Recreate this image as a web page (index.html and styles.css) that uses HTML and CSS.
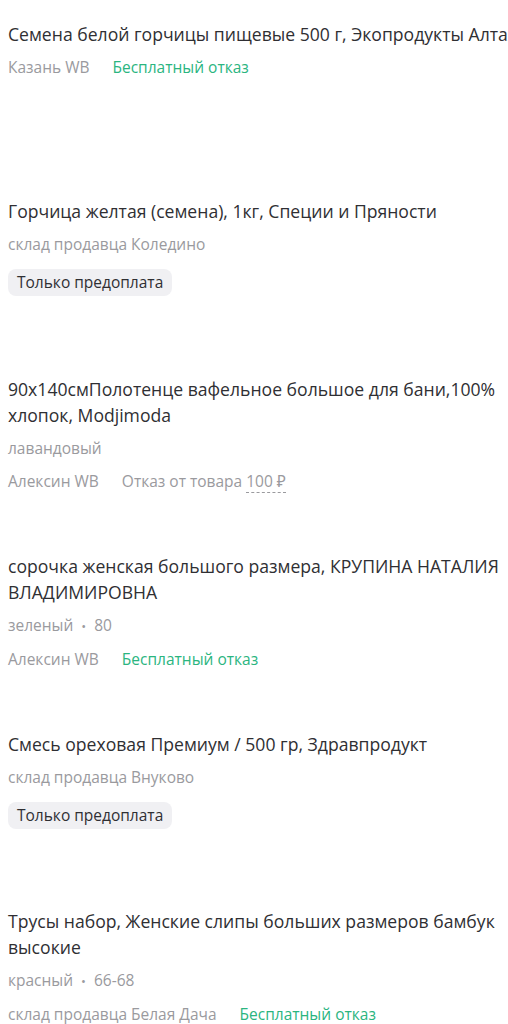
FILE: index.html
```html
<!DOCTYPE html>
<html lang="ru">
<head>
<meta charset="utf-8">
<link rel="stylesheet" href="styles.css">
</head>
<body>
<div class="list">
  <div class="item">
    <div class="title nowrap">Семена белой горчицы пищевые 500 г, Экопродукты Алтая</div>
    <div class="meta"><span class="store">Казань WB</span><span class="green">Бесплатный отказ</span></div>
  </div>
  <div class="item">
    <div class="title">Горчица желтая (семена), 1кг, Специи и Пряности</div>
    <div class="meta"><span class="store">склад продавца Коледино</span></div>
    <div class="badge">Только предоплата</div>
  </div>
  <div class="item">
    <div class="title">90x140смПолотенце вафельное большое для бани,100% хлопок, Modjimoda</div>
    <div class="meta">лавандовый</div>
    <div class="meta"><span class="store">Алексин WB</span><span class="refuse">Отказ от товара <span class="price">100 ₽</span></span></div>
  </div>
  <div class="item">
    <div class="title">сорочка женская большого размера, КРУПИНА НАТАЛИЯ ВЛАДИМИРОВНА</div>
    <div class="meta">зеленый<span class="dot">•</span>80</div>
    <div class="meta"><span class="store">Алексин WB</span><span class="green">Бесплатный отказ</span></div>
  </div>
  <div class="item">
    <div class="title">Смесь ореховая Премиум / 500 гр, Здравпродукт</div>
    <div class="meta"><span class="store">склад продавца Внуково</span></div>
    <div class="badge">Только предоплата</div>
  </div>
  <div class="item">
    <div class="title">Трусы набор, Женские слипы больших размеров бамбук высокие</div>
    <div class="meta">красный<span class="dot">•</span>66-68</div>
    <div class="meta"><span class="store">склад продавца Белая Дача</span><span class="green">Бесплатный отказ</span></div>
  </div>
</div>
</body>
</html>
```
FILE: styles.css
```css
html, body {
  margin: 0;
  padding: 0;
  background: #ffffff;
  overflow: hidden;
}
body {
  font-family: "Open Sans", "Noto Sans", sans-serif;
  color: #2f2f33;
}
.list {
  display: flex;
  flex-direction: column;
  padding-left: 8px;
}
.item {
  height: 177.4px;
  padding-top: 21px;
  box-sizing: border-box;
  display: flex;
  flex-direction: column;
  align-items: flex-start;
}
.title {
  font-size: 17.6px;
  line-height: 26px;
  color: #2f2f33;
}
.nowrap {
  white-space: nowrap;
}
.meta {
  font-size: 15.5px;
  line-height: 20px;
  color: #9a9a9e;
  margin-top: 13px;
}
.title + .meta {
  margin-top: 10px;
}
.store {
  margin-right: 23px;
}
.green {
  color: #2bb57f;
}
.refuse {
  color: #9a9a9e;
}
.price {
  border-bottom: 1px dashed #9a9a9e;
}
.dot {
  margin: 0 8px;
  font-size: 13px;
}
.badge {
  margin-top: 15px;
  background: #f0f0f3;
  border-radius: 8px;
  padding: 0 9px;
  height: 27px;
  line-height: 27px;
  font-size: 15.5px;
  color: #2f2f33;
}
```
